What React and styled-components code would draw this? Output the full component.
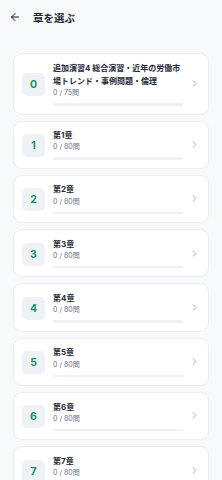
import React from 'react';
import styled, { createGlobalStyle } from 'styled-components';
import { ArrowLeft, ChevronRight } from 'lucide-react';

const chapters = [
  { no: 0, title: '追加演習4 総合演習・近年の労働市場トレンド・事例問題・倫理', done: 0, total: 75 },
  { no: 1, title: '第1章', done: 0, total: 80 },
  { no: 2, title: '第2章', done: 0, total: 80 },
  { no: 3, title: '第3章', done: 0, total: 80 },
  { no: 4, title: '第4章', done: 0, total: 80 },
  { no: 5, title: '第5章', done: 0, total: 80 },
  { no: 6, title: '第6章', done: 0, total: 80 },
  { no: 7, title: '第7章', done: 0, total: 80 },
];

const GlobalStyle = createGlobalStyle`
  body {
    margin: 0;
    background: #f8f9fa;
    font-family: "Inter", "Noto Sans CJK JP", sans-serif;
    color: #1f2937;
  }
`;

const Page = styled.div`
  min-height: 480px;
  background: #f8f9fa;
`;

const Header = styled.div`
  display: flex;
  align-items: center;
  gap: 12px;
  height: 34px;
  padding: 0 9px;
  box-sizing: border-box;
`;

const BackButton = styled.button`
  display: flex;
  align-items: center;
  justify-content: center;
  border: none;
  background: transparent;
  padding: 0;
  color: #111827;
  width: 12px;
  height: 12px;
`;

const Title = styled.h1`
  margin: 0;
  font-size: 10.5px;
  font-weight: 700;
  color: #1f2937;
`;

const List = styled.div`
  display: flex;
  flex-direction: column;
  gap: 6px;
  padding: 19px 13px 0;
`;

const Card = styled.div`
  display: flex;
  align-items: center;
  background: #fff;
  border: 1px solid #eceef1;
  border-radius: 9px;
  padding: 7.5px 8px 8px 8px;
`;

const Badge = styled.div`
  flex: none;
  width: 23px;
  height: 23px;
  border-radius: 5px;
  background: #eef2f6;
  color: #17935f;
  font-size: 10.5px;
  font-weight: 700;
  display: flex;
  align-items: center;
  justify-content: center;
  margin-right: 8px;
  margin-top: 2px;
`;

const Body = styled.div`
  flex: 1;
  min-width: 0;
  display: flex;
  flex-direction: column;
`;

const ChapterName = styled.div`
  font-size: 8px;
  font-weight: 700;
  line-height: 13.3px;
  color: #1f2937;
`;

const Count = styled.div`
  font-size: 7px;
  line-height: 10px;
  color: #6b7280;
`;

const Track = styled.div`
  margin-top: 5px;
  height: 2.5px;
  border-radius: 2px;
  background: #eef1f5;
`;

const Fill = styled.div`
  height: 100%;
  border-radius: 2px;
  background: #17935f;
`;

const Chevron = styled.div`
  flex: none;
  width: 17px;
  display: flex;
  justify-content: flex-end;
  color: #9ca3af;
`;

export default function App() {
  return (
    <Page>
      <GlobalStyle />
      <Header>
        <BackButton>
          <ArrowLeft size={12} strokeWidth={2} />
        </BackButton>
        <Title>章を選ぶ</Title>
      </Header>
      <List>
        {chapters.map((c) => (
          <Card key={c.no}>
            <Badge>{c.no}</Badge>
            <Body>
              <ChapterName>{c.title}</ChapterName>
              <Count>{c.done} / {c.total}問</Count>
              <Track>
                <Fill style={{ width: `${(c.done / c.total) * 100}%` }} />
              </Track>
            </Body>
            <Chevron>
              <ChevronRight size={11} strokeWidth={2} />
            </Chevron>
          </Card>
        ))}
      </List>
    </Page>
  );
}
